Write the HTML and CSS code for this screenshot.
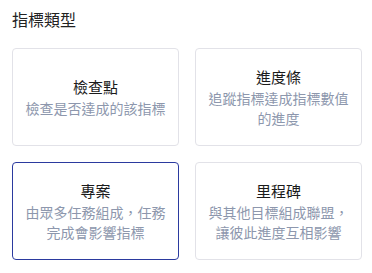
FILE: index.html
```html
<!DOCTYPE html>
<html lang="zh-Hant">
<head>
<meta charset="utf-8">
<link rel="stylesheet" href="styles.css">
</head>
<body>
<div class="page">
  <h2 class="heading">指標類型</h2>
  <div class="grid">
    <div class="card">
      <div class="title">檢查點</div>
      <div class="desc">檢查是否達成的該指標</div>
    </div>
    <div class="card">
      <div class="title">進度條</div>
      <div class="desc">追蹤指標達成指標數值的進度</div>
    </div>
    <div class="card selected">
      <div class="title">專案</div>
      <div class="desc">由眾多任務組成，任務完成會影響指標</div>
    </div>
    <div class="card">
      <div class="title">里程碑</div>
      <div class="desc">與其他目標組成聯盟，讓彼此進度互相影響</div>
    </div>
  </div>
</div>
</body>
</html>
```
FILE: styles.css
```css
html, body {
  margin: 0;
  padding: 0;
  background: #ffffff;
}
.page {
  padding: 8px 10px 0 12px;
  font-family: "Noto Sans CJK TC", "Noto Sans", sans-serif;
}
.heading {
  margin: 0 0 18px 0;
  font-size: 16px;
  line-height: 22px;
  font-weight: 400;
  color: #222222;
}
.grid {
  display: grid;
  grid-template-columns: 1fr 1fr;
  column-gap: 16px;
  row-gap: 16px;
}
.card {
  box-sizing: border-box;
  height: 98px;
  border: 1px solid #e2e2e8;
  border-radius: 4px;
  padding: 0 12px;
  display: flex;
  flex-direction: column;
  justify-content: center;
  align-items: center;
  text-align: center;
}
.card.selected {
  border-color: #2b3a9f;
}
.title {
  font-size: 15px;
  line-height: 22px;
  color: #1b1b1b;
}
.desc {
  font-size: 14px;
  line-height: 20px;
  color: #8d97ad;
}
```
